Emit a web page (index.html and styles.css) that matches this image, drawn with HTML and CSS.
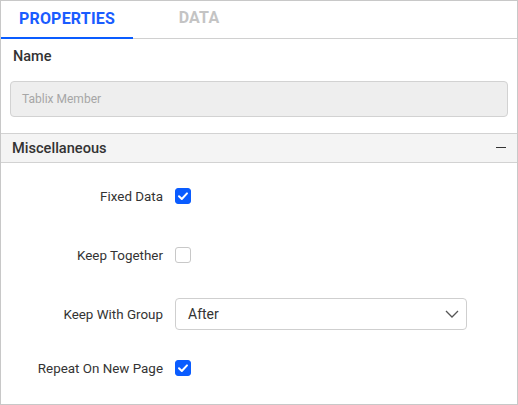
FILE: index.html
```html
<!DOCTYPE html>
<html>
<head>
<meta charset="utf-8">
<link rel="stylesheet" href="styles.css">
</head>
<body>
<div class="panel">
  <div class="tabs">
    <div class="tab active">PROPERTIES</div>
    <div class="tab">DATA</div>
  </div>
  <div class="name-sec">
    <div class="sec-label">Name</div>
    <div class="name-input">Tablix Member</div>
  </div>
  <div class="group-head">
    <span class="group-title">Miscellaneous</span>
    <span class="minus"></span>
  </div>
  <div class="rows">
    <div class="row r1">
      <div class="lbl">Fixed Data</div>
      <div class="cb on"><svg viewBox="0 0 16 16" width="16" height="16"><path d="M4 8.3 L6.8 11 L12 5.4" fill="none" stroke="#fff" stroke-width="2" stroke-linecap="round" stroke-linejoin="round"/></svg></div>
    </div>
    <div class="row r2">
      <div class="lbl">Keep Together</div>
      <div class="cb"></div>
    </div>
    <div class="row r3">
      <div class="lbl">Keep With Group</div>
      <div class="dropdown">
        <span>After</span>
        <svg viewBox="0 0 14 8" width="14" height="8"><path d="M1 1 L7 7 L13 1" fill="none" stroke="#555" stroke-width="1.3"/></svg>
      </div>
    </div>
    <div class="row r4">
      <div class="lbl">Repeat On New Page</div>
      <div class="cb on"><svg viewBox="0 0 16 16" width="16" height="16"><path d="M4 8.3 L6.8 11 L12 5.4" fill="none" stroke="#fff" stroke-width="2" stroke-linecap="round" stroke-linejoin="round"/></svg></div>
    </div>
  </div>
</div>
</body>
</html>
```
FILE: styles.css
```css
html, body { margin: 0; padding: 0; background: #fff; }
body { font-family: Roboto, "Liberation Sans", sans-serif; color: #333; }
.panel {
  width: 518px; height: 405px; box-sizing: border-box;
  border: 1px solid #c8c8c8; background: #fff; overflow: hidden;
}
.tabs {
  display: flex; height: 37px;
  border-bottom: 1px solid #d0d0d0;
}
.tab {
  width: 132px; height: 37px; box-sizing: border-box;
  display: flex; align-items: center; justify-content: center;
  padding-bottom: 4px;
  font-size: 16px; font-weight: 700; color: #c4c4c4; letter-spacing: 0.2px;
}
.tab.active {
  color: #1a5cff;
  border-bottom: 2px solid #0a5cff;
  height: 38px; padding-bottom: 2px;
}
.name-sec { padding: 10px 9px 0 9px; height: 84px; box-sizing: border-box; }
.sec-label { font-size: 14.5px; font-weight: 500; color: #333; padding-left: 3px; line-height: 16px; }
.name-input {
  margin-top: 16px; height: 36px; box-sizing: border-box;
  border: 1px solid #d2d2d2; border-radius: 4px; background: #eeeeee;
  font-size: 12px; color: #a6a6a6; padding-left: 11px;
  display: flex; align-items: center;
}
.group-head {
  margin-top: 10px;
  height: 30px; box-sizing: border-box;
  border-top: 1px solid #d2d2d2; border-bottom: 1px solid #d2d2d2;
  background: #f4f4f4;
  display: flex; align-items: center; justify-content: space-between;
  padding: 0 11px 0 11px;
}
.group-title { font-size: 14.6px; font-weight: 500; color: #333; }
.minus { width: 10px; height: 1.5px; background: #333; display: block; margin-top: -1px; }
.rows { display: flex; flex-direction: column; }
.row { display: flex; align-items: center; height: 32px; }
.r1 { margin-top: 17px; }
.r2 { margin-top: 27px; }
.r3 { margin-top: 27px; }
.r4 { margin-top: 22px; }
.lbl { width: 162px; text-align: right; font-size: 13.4px; color: #333; margin-right: 12px; }
.cb {
  width: 16px; height: 16px; box-sizing: border-box;
  border: 1px solid #c8c8c8; border-radius: 3px; background: #fff;
  position: relative;
}
.cb.on { background: #0a5cff; border-color: #0a5cff; }
.cb svg { position: absolute; left: -1px; top: -1px; }
.dropdown {
  width: 292px; height: 32px; box-sizing: border-box;
  border: 1px solid #cfcfcf; border-radius: 4px;
  display: flex; align-items: center; justify-content: space-between;
  padding: 0 7px 0 12px; font-size: 14px; color: #333;
}
```
